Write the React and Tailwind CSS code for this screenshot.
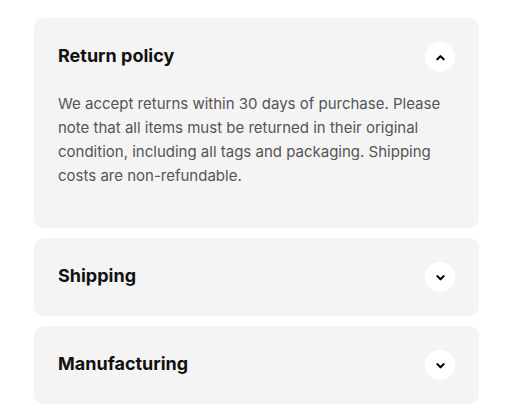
import React, { useState } from "react";

const items = [
  {
    title: "Return policy",
    body: "We accept returns within 30 days of purchase. Please note that all items must be returned in their original condition, including all tags and packaging. Shipping costs are non-refundable.",
  },
  { title: "Shipping", body: "Orders ship within 2 business days." },
  { title: "Manufacturing", body: "All products are made ethically." },
];

const Chevron = ({ up }) => (
  <svg
    className="w-[11px] h-[11px]"
    viewBox="0 0 24 24"
    fill="none"
    stroke="currentColor"
    strokeWidth={4.5}
    strokeLinecap="round"
    strokeLinejoin="round"
  >
    <path d={up ? "M5 16l7-7 7 7" : "M5 9l7 7 7-7"} />
  </svg>
);

export default function App() {
  const [open, setOpen] = useState(0);

  return (
    <div
      className="bg-white min-h-screen px-[34px] pt-[18px] flex flex-col gap-2.5"
      style={{ fontFamily: "Inter, 'Noto Sans', sans-serif" }}
    >
      {items.map((item, i) => (
        <div key={item.title} className="w-[445px] bg-[#f4f4f4] rounded-[10px] px-6 py-6">
          <button
            type="button"
            onClick={() => setOpen(open === i ? -1 : i)}
            className="w-full flex items-center justify-between"
          >
            <span className="text-[18px] leading-[26px] font-bold text-[#111] -mt-0.5">{item.title}</span>
            <span className="w-[30px] h-[30px] rounded-full bg-white flex items-center justify-center text-black">
              <Chevron up={open === i} />
            </span>
          </button>
          {open === i && (
            <p className="mt-5 mb-4 text-[15px] leading-6 text-[#555]">{item.body}</p>
          )}
        </div>
      ))}
    </div>
  );
}
